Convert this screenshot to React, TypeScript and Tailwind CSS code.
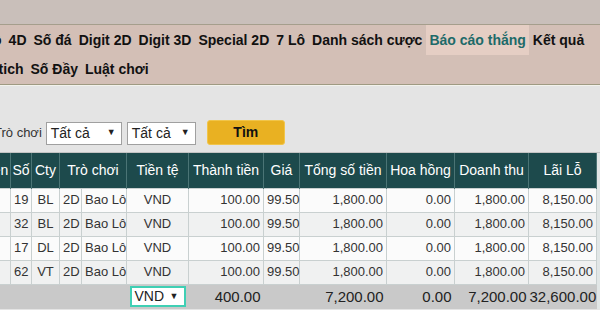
import { ReactNode } from 'react'

const MENU_ROW_1 = ['Lô', '4D', 'Số đá', 'Digit 2D', 'Digit 3D', 'Special 2D', '7 Lô', 'Danh sách cược', 'Báo cáo thắng', 'Kết quả']
const MENU_ROW_2 = ['Phân tich', 'Số Đầy', 'Luật chơi']
const ACTIVE = 'Báo cáo thắng'

const ROWS = [
  { so: '19', cty: 'BL' },
  { so: '32', cty: 'BL' },
  { so: '17', cty: 'DL' },
  { so: '62', cty: 'VT' },
]

function MenuItem({ label }: { label: string }) {
  const active = label === ACTIVE
  return (
    <span
      className={`h-full flex items-center px-[3.5px] whitespace-nowrap ${
        active ? 'bg-[#e5cec4] text-[#1d6a69]' : 'text-[#111]'
      }`}
    >
      {label}
    </span>
  )
}

function FakeSelect({ label, width }: { label: string; width: string }) {
  return (
    <div
      className={`${width} h-[23px] bg-white border border-[#a0a0a0] flex items-center justify-between pl-[4px] pr-[5px] text-[14px] text-[#222]`}
    >
      <span>{label}</span>
      <span className="text-[9px]">▼</span>
    </div>
  )
}

function Td({ children, className = '' }: { children?: ReactNode; className?: string }) {
  return <td className={`border border-[#c9d0d0] px-[3px] h-[24px] ${className}`}>{children}</td>
}

export default function App() {
  return (
    <div className="w-[600px] h-[310px] overflow-hidden bg-[#e4e4e4] font-['Liberation_Sans',Arial,sans-serif]">
      {/* top band */}
      <div className="h-[25px] bg-[#c9bfba] border-b border-[#a59e8c]" />

      {/* menu */}
      <div className="bg-[#d3bfb6] text-[14px] font-bold border-b border-[#9f9a82]">
        <div className="h-[30px] flex -ml-[19px]">
          {MENU_ROW_1.map((m) => (
            <MenuItem key={m} label={m} />
          ))}
        </div>
        <div className="h-[29px] flex -ml-[43px]">
          {MENU_ROW_2.map((m) => (
            <MenuItem key={m} label={m} />
          ))}
        </div>
      </div>

      {/* filters */}
      <div className="h-[68px] border-t border-[#f2f2ec] border-b border-b-[#c4c4c4] flex items-start pt-[35px]">
        <div className="flex items-center -ml-[6px]">
          <span className="text-[13px] text-[#333] mr-[4px]">Trò chơi</span>
          <FakeSelect label="Tất cả" width="w-[76px]" />
          <div className="w-[5px]" />
          <FakeSelect label="Tất cả" width="w-[69px]" />
          <button className="ml-[11px] w-[78px] h-[25px] -mt-[1px] rounded-[3px] bg-[#e9b122] border border-[#f1c54a] text-[14px] font-bold text-[#111]">
            Tìm
          </button>
        </div>
      </div>

      {/* table */}
      <div className="flex">
        <table className="table-fixed border-collapse w-[626px] -ml-[30px] shrink-0 text-[13px] text-[#333]">
          <colgroup>
            <col className="w-[40px]" />
            <col className="w-[21px]" />
            <col className="w-[28px]" />
            <col className="w-[22px]" />
            <col className="w-[45px]" />
            <col className="w-[62px]" />
            <col className="w-[75px]" />
            <col className="w-[36px]" />
            <col className="w-[87px]" />
            <col className="w-[68px]" />
            <col className="w-[74px]" />
            <col className="w-[68px]" />
          </colgroup>
          <thead>
            <tr className="bg-[#1d4a4c] text-white text-[14px] h-[35px]">
              {['Phiên', 'Số', 'Cty'].map((h) => (
                <th key={h} className="font-normal border-x border-[#4b7475] px-0 whitespace-nowrap overflow-hidden">
                  {h}
                </th>
              ))}
              <th colSpan={2} className="font-normal border-x border-[#4b7475] whitespace-nowrap">
                Trò chơi
              </th>
              {['Tiền tệ', 'Thành tiền', 'Giá', 'Tổng số tiền', 'Hoa hồng', 'Doanh thu', 'Lãi Lỗ'].map((h) => (
                <th key={h} className="font-normal border-x border-[#4b7475] px-0 whitespace-nowrap">
                  {h}
                </th>
              ))}
            </tr>
          </thead>
          <tbody>
            {ROWS.map((r, i) => (
              <tr key={r.so} className={i % 2 === 0 ? 'bg-[#fbfbfb]' : 'bg-[#f0f1f1]'}>
                <Td />
                <Td className="text-center">{r.so}</Td>
                <Td className="text-center">{r.cty}</Td>
                <Td className="text-center px-0">2D</Td>
                <Td className="whitespace-nowrap">Bao Lô</Td>
                <Td className="text-center">VND</Td>
                <Td className="text-right">100.00</Td>
                <Td className="text-right px-[1px]">99.50</Td>
                <Td className="text-right">1,800.00</Td>
                <Td className="text-right">0.00</Td>
                <Td className="text-right">1,800.00</Td>
                <Td className="text-right">8,150.00</Td>
              </tr>
            ))}
            <tr className="bg-[#c9c9c9] text-[15px] text-[#222] h-[25px]">
              <td colSpan={5} />
              <td className="px-[3px]">
                <div className="w-[56px] h-[21px] bg-white border-2 border-[#3fcfb4] flex items-center justify-between pl-[3px] pr-[5px] text-[14px]">
                  <span>VND</span>
                  <span className="text-[9px]">▼</span>
                </div>
              </td>
              <td className="text-right px-[3px]">400.00</td>
              <td />
              <td className="text-right px-[3px]">7,200.00</td>
              <td className="text-right px-[3px]">0.00</td>
              <td className="text-right px-[2px]">7,200.00</td>
              <td className="text-right px-[1px] whitespace-nowrap">32,600.00</td>
            </tr>
          </tbody>
        </table>
        <div className="flex-1 bg-[#e1e6e6]" />
      </div>
    </div>
  )
}
